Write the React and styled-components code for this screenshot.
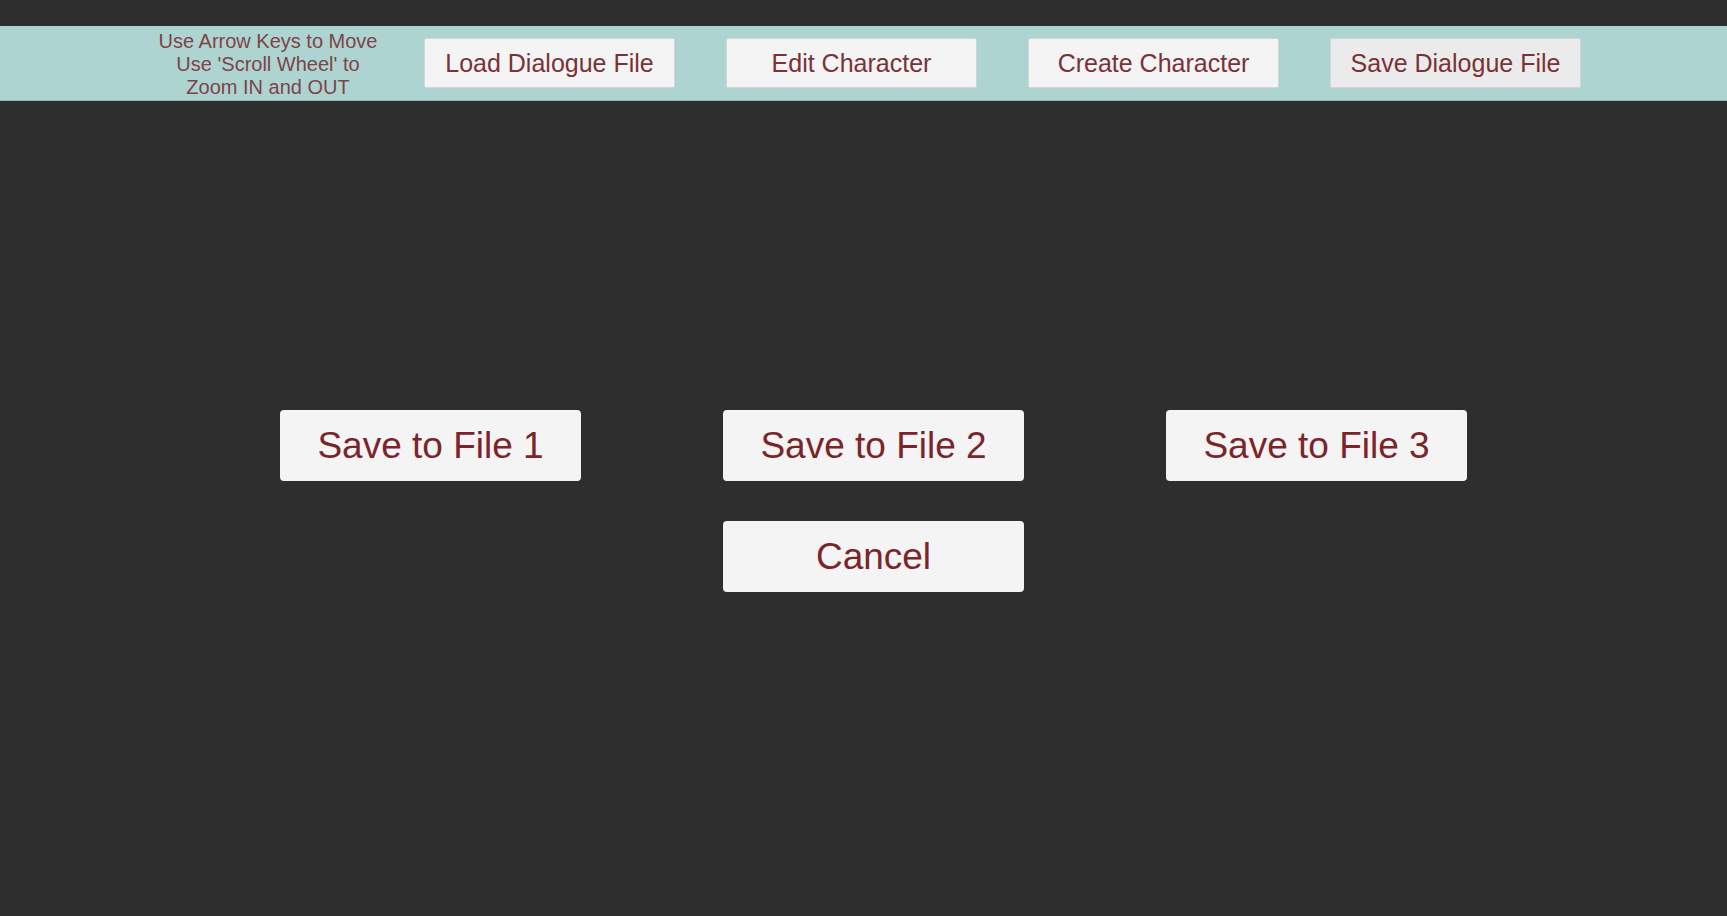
import styled, { createGlobalStyle } from 'styled-components';

const GlobalStyle = createGlobalStyle`
  html, body {
    margin: 0;
    padding: 0;
    background: #2e2e2e;
    font-family: "Liberation Sans", Arial, sans-serif;
  }
`;

const Page = styled.div`
  width: 1727px;
  height: 916px;
  background: #2e2e2e;
  padding-top: 26px;
  box-sizing: border-box;
  overflow: hidden;
`;

const Toolbar = styled.div`
  height: 75px;
  background: #aed4d2;
  border-bottom: 1px solid #92b9b6;
  box-sizing: border-box;
  display: flex;
  align-items: center;
  padding-left: 142px;
`;

const Hint = styled.div`
  width: 252px;
  text-align: center;
  font-size: 20px;
  line-height: 23px;
  color: #7d4446;
  padding-top: 3px;
`;

const ToolRow = styled.div`
  display: flex;
  gap: 51px;
  margin-left: 30px;
`;

const ToolButton = styled.button`
  width: 251px;
  height: 50px;
  background: ${p => (p.$active ? '#ebebeb' : '#f4f4f4')};
  border: 1px solid #d2d6d6;
  border-radius: 2px;
  font-family: inherit;
  font-size: 25px;
  color: #7a3236;
  padding: 0;
  cursor: pointer;
`;

const Dialog = styled.div`
  display: grid;
  grid-template-columns: repeat(3, 301px);
  grid-auto-rows: 71px;
  column-gap: 142px;
  row-gap: 40px;
  padding: 309px 0 0 280px;
`;

const BigButton = styled.button`
  grid-column: ${p => p.$col || 'auto'};
  background: #f4f4f4;
  border: none;
  border-radius: 4px;
  font-family: inherit;
  font-size: 37px;
  color: #7b252b;
  padding: 0;
  cursor: pointer;
`;

const toolButtons = ['Load Dialogue File', 'Edit Character', 'Create Character', 'Save Dialogue File'];

export default function App() {
  return (
    <Page>
      <GlobalStyle />
      <Toolbar>
        <Hint>
          Use Arrow Keys to Move
          <br />
          Use 'Scroll Wheel' to
          <br />
          Zoom IN and OUT
        </Hint>
        <ToolRow>
          {toolButtons.map(label => (
            <ToolButton key={label} $active={label === 'Save Dialogue File'}>
              {label}
            </ToolButton>
          ))}
        </ToolRow>
      </Toolbar>
      <Dialog>
        <BigButton>Save to File 1</BigButton>
        <BigButton>Save to File 2</BigButton>
        <BigButton>Save to File 3</BigButton>
        <BigButton $col={2}>Cancel</BigButton>
      </Dialog>
    </Page>
  );
}
